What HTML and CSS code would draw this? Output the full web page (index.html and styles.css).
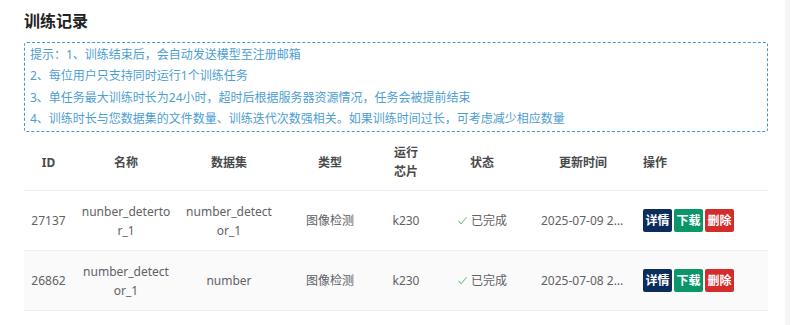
FILE: index.html
```html
<!DOCTYPE html>
<html lang="zh-CN">
<head>
<meta charset="utf-8">
<link rel="stylesheet" href="styles.css">
</head>
<body>
<div class="page">
  <main class="main">
    <h2 class="title">训练记录</h2>
    <div class="notice">
      <div>提示：1、训练结束后，会自动发送模型至注册邮箱</div>
      <div>2、每位用户只支持同时运行1个训练任务</div>
      <div>3、单任务最大训练时长为24小时，超时后根据服务器资源情况，任务会被提前结束</div>
      <div>4、训练时长与您数据集的文件数量、训练迭代次数强相关。如果训练时间过长，可考虑减少相应数量</div>
    </div>
    <table class="grid">
      <colgroup>
        <col class="c-id"><col class="c-name"><col class="c-ds"><col class="c-type"><col class="c-chip"><col class="c-status"><col class="c-time"><col class="c-ops">
      </colgroup>
      <thead>
        <tr>
          <th>ID</th><th>名称</th><th>数据集</th><th>类型</th><th class="chip">运行芯片</th><th>状态</th><th>更新时间</th><th class="left">操作</th>
        </tr>
      </thead>
      <tbody>
        <tr>
          <td class="id">27137</td><td class="name">nunber_detertor_1</td><td>number_detector_1</td><td>图像检测</td><td>k230</td>
          <td><span class="status"><svg class="check" viewBox="0 0 12 12" width="11" height="11"><path d="M1.5 6.5 L4.5 9.5 L10.5 2.5" fill="none" stroke="#7cc48a" stroke-width="1.1"/></svg>已完成</span></td>
          <td><div class="ellip">2025-07-09 20:15:32</div></td>
          <td class="left"><div class="ops"><span class="btn navy">详情</span><span class="btn green">下载</span><span class="btn red">删除</span></div></td>
        </tr>
        <tr class="alt">
          <td class="id">26862</td><td class="name">number_detector_1</td><td>number</td><td>图像检测</td><td>k230</td>
          <td><span class="status"><svg class="check" viewBox="0 0 12 12" width="11" height="11"><path d="M1.5 6.5 L4.5 9.5 L10.5 2.5" fill="none" stroke="#7cc48a" stroke-width="1.1"/></svg>已完成</span></td>
          <td><div class="ellip">2025-07-08 21:40:11</div></td>
          <td class="left"><div class="ops"><span class="btn navy">详情</span><span class="btn green">下载</span><span class="btn red">删除</span></div></td>
        </tr>
      </tbody>
    </table>
  </main>
  <div class="gutter"></div>
</div>
</body>
</html>
```
FILE: styles.css
```css
* { box-sizing: border-box; }
html, body { margin: 0; padding: 0; background: #fff; }
body {
  font-family: "Noto Sans", "Noto Sans CJK SC", sans-serif;
  font-size: 12px;
  color: #606266;
}
.page { display: flex; width: 790px; height: 325px; overflow: hidden; }
.main { width: 785px; padding: 10px 17px 0 24px; }
.gutter { width: 5px; background: #f5f5f5; }
.title {
  margin: 0 0 10px 0;
  font-size: 16px;
  line-height: 22px;
  font-weight: 700;
  color: #222;
}
.notice {
  border: 1px dashed #3d9bd0;
  border-radius: 3px;
  padding: 1px 5px;
  color: #4d9ed2;
  font-size: 12px;
  line-height: 21.4px;
}
.grid {
  width: 744px;
  border-collapse: collapse;
  table-layout: fixed;
  margin-top: 3px;
}
.c-id { width: 49px; }
.c-name { width: 106px; }
.c-ds { width: 100px; }
.c-type { width: 102px; }
.c-chip { width: 50px; }
.c-status { width: 102px; }
.c-time { width: 100px; }
.c-ops { width: 135px; }
th, td {
  padding: 10px 6px;
  text-align: center;
  vertical-align: middle;
  border-bottom: 1px solid #ebeef5;
  word-break: break-all;
  line-height: 19px;
}
th {
  font-weight: 700;
  color: #4a4a4a;
  height: 56px;
  padding: 8px 6px;
}
th.chip { padding: 8px 12px; }
td { height: 60px; color: #606266; }
td.name { padding-left: 7px; padding-right: 7px; }
td.id, th:first-child { padding-left: 2px; padding-right: 2px; }
.left { text-align: left; }
th.left, td.left { padding-left: 10px; }
tr.alt td { background: #fafafa; }
.status { display: inline-flex; align-items: center; gap: 3px; }
.check { display: block; }
.ellip { white-space: nowrap; overflow: hidden; text-overflow: ellipsis; padding: 0 2px; }
.ops { display: flex; gap: 2px; }
.btn {
  display: inline-flex;
  align-items: center;
  justify-content: center;
  width: 29px;
  height: 23px;
  border-radius: 2px;
  color: #fff;
  font-weight: 700;
  font-size: 12px;
  white-space: nowrap;
}
.navy { background: #0b2d5c; }
.green { background: #0a9669; }
.red { background: #d32c2a; }
```
